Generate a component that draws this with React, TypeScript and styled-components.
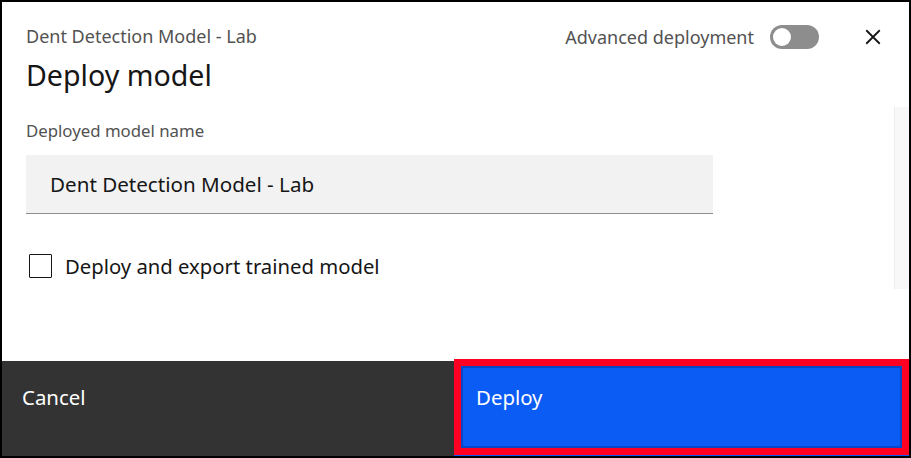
import React from "react";
import styled, { createGlobalStyle } from "styled-components";

const Global = createGlobalStyle`
  html, body { margin: 0; padding: 0; background: #000; }
  body { font-family: "Noto Sans", "Open Sans", sans-serif; }
  * { box-sizing: border-box; }
`;

const Frame = styled.div`
  width: 911px;
  height: 458px;
  border: 2px solid #000;
  background: #fff;
  display: flex;
  flex-direction: column;
  overflow: hidden;
`;

const Header = styled.header`
  height: 105px;
  padding: 22px 26px 0 24px;
  display: flex;
  justify-content: space-between;
  align-items: flex-start;
`;

const Titles = styled.div`
  display: flex;
  flex-direction: column;
`;

const Subtitle = styled.div`
  font-size: 18px;
  line-height: 24px;
  color: #525252;
`;

const Title = styled.h1`
  margin: 9px 0 0 0;
  font-size: 28.6px;
  font-weight: 400;
  line-height: 36px;
  color: #161616;
`;

const HeaderActions = styled.div`
  display: flex;
  align-items: center;
  gap: 16px;
  margin-top: 1px;
`;

const ToggleLabel = styled.span`
  font-size: 18px;
  line-height: 24px;
  color: #525252;
`;

const Toggle = styled.div<{ on?: boolean }>`
  width: 49px;
  height: 24px;
  border-radius: 12px;
  background: ${(p) => (p.on ? "#24a148" : "#8d8d8d")};
  position: relative;
  &::after {
    content: "";
    position: absolute;
    top: 3px;
    left: ${(p) => (p.on ? "28px" : "3px")};
    width: 18px;
    height: 18px;
    border-radius: 50%;
    background: #fff;
  }
`;

const CloseButton = styled.button`
  margin-left: 28px;
  width: 20px;
  height: 20px;
  padding: 0;
  border: none;
  background: transparent;
  display: flex;
  align-items: center;
  justify-content: center;
  color: #161616;
`;

const Content = styled.div`
  height: 182px;
  display: flex;
`;

const Form = styled.div`
  flex: 1;
  padding: 14px 0 0 24px;
  display: flex;
  flex-direction: column;
`;

const FieldLabel = styled.label`
  font-size: 16.8px;
  line-height: 20px;
  color: #525252;
`;

const TextInput = styled.div`
  margin-top: 14px;
  width: 687px;
  height: 59px;
  background: #f2f2f2;
  border-bottom: 1px solid #8d8d8d;
  display: flex;
  align-items: center;
  padding-left: 24px;
  font-size: 20.6px;
  color: #161616;
`;

const CheckRow = styled.div`
  margin-top: 38px;
  display: flex;
  align-items: center;
  gap: 13px;
  padding-left: 3px;
`;

const Box = styled.span`
  width: 23px;
  height: 24px;
  border: 1px solid #161616;
  border-radius: 1px;
  background: #fff;
`;

const CheckText = styled.span`
  font-size: 20.3px;
  line-height: 28px;
  color: #161616;
`;

const ScrollTrack = styled.div`
  width: 15px;
  height: 182px;
  background: #f8f8f8;
  border-left: 1px solid #ececec;
`;

const Spacer = styled.div`
  flex: 1;
`;

const Footer = styled.footer`
  height: 95px;
  display: grid;
  grid-template-columns: 452px 1fr;
`;

const FooterButton = styled.button<{ primary?: boolean }>`
  position: relative;
  border: none;
  margin: 0;
  padding: 0 0 0 ${(p) => (p.primary ? "22px" : "20px")};
  text-align: left;
  display: flex;
  align-items: flex-start;
  padding-top: 23px;
  font-family: inherit;
  font-size: 20.4px;
  line-height: 26px;
  color: #fff;
  background: ${(p) => (p.primary ? "#0b5bf5" : "#333333")};
  ${(p) =>
    p.primary
      ? `
    &::after {
      content: "";
      position: absolute;
      top: -2px;
      left: 0;
      right: 0;
      bottom: 1px;
      border: 7px solid #ff0022;
      pointer-events: none;
    }
    &::before {
      content: "";
      position: absolute;
      top: 5px;
      left: 7px;
      right: 7px;
      bottom: 8px;
      border: 2px solid #0a47c8;
      pointer-events: none;
    }
  `
      : ""}
`;

export default function App() {
  return (
    <>
      <Global />
      <Frame>
        <Header>
          <Titles>
            <Subtitle>Dent Detection Model - Lab</Subtitle>
            <Title>Deploy model</Title>
          </Titles>
          <HeaderActions>
            <ToggleLabel>Advanced deployment</ToggleLabel>
            <Toggle />
            <CloseButton aria-label="Close">
              <svg width="18" height="18" viewBox="0 0 16 16">
                <path d="M2 2 L14 14 M14 2 L2 14" stroke="#161616" strokeWidth="1.6" fill="none" />
              </svg>
            </CloseButton>
          </HeaderActions>
        </Header>
        <Content>
          <Form>
            <FieldLabel>Deployed model name</FieldLabel>
            <TextInput>Dent Detection Model - Lab</TextInput>
            <CheckRow>
              <Box />
              <CheckText>Deploy and export trained model</CheckText>
            </CheckRow>
          </Form>
          <ScrollTrack />
        </Content>
        <Spacer />
        <Footer>
          <FooterButton>Cancel</FooterButton>
          <FooterButton primary>Deploy</FooterButton>
        </Footer>
      </Frame>
    </>
  );
}
